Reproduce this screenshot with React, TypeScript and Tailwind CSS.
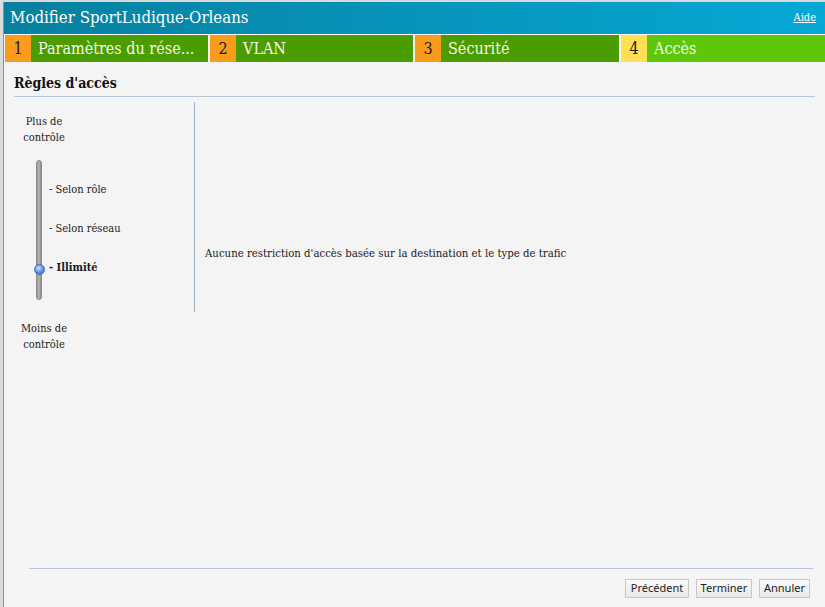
import React from "react";

const serif = { fontFamily: '"DejaVu Serif", "Liberation Serif", serif', fontStretch: "condensed" as const };

export default function App() {
  const steps = [
    { n: "1", label: "Paramètres du rése...", num: "bg-[#f99b1d]", body: "bg-[#4b9c00] w-[177px]" },
    { n: "2", label: "VLAN", num: "bg-[#f99b1d]", body: "bg-[#4b9c00] w-[177px]" },
    { n: "3", label: "Sécurité", num: "bg-[#f99b1d]", body: "bg-[#4b9c00] w-[178px]" },
    { n: "4", label: "Accès", num: "bg-[#ffdf55]", body: "bg-[#5ec70b] flex-1" },
  ];
  const buttons = [
    { label: "Précédent", w: "w-[64px]" },
    { label: "Terminer", w: "w-[56px]" },
    { label: "Annuler", w: "w-[51px]" },
  ];

  return (
    <div className="w-[825px] h-[607px] flex bg-[#d9d9d9] overflow-hidden" style={serif}>
      {/* window behind */}
      <div className="w-[3px] shrink-0 bg-[#dcdcdc]" />
      <div className="flex-1 flex flex-col border-l border-[#8e8e8e] bg-[#f4f4f4] mt-[2px]">
        {/* Header */}
        <div className="h-[33px] flex items-center justify-between px-[6px] bg-gradient-to-r from-[#07809f] to-[#06a8d6] border-b border-white">
          <span className="text-white text-[16.7px]">Modifier SportLudique-Orleans</span>
          <a className="text-white text-[11px] underline mr-[3px]">Aide</a>
        </div>

        {/* Steps */}
        <div className="h-[27px] flex pl-px">
          {steps.map((s, i) => (
            <div key={i} className={`flex ${i === 3 ? "flex-1" : ""} ${i > 0 ? "ml-[2px]" : ""}`}>
              <div className={`${s.num} w-[26px] flex items-center justify-center text-[16px] text-[#1a1a1a]`}>{s.n}</div>
              <div className={`${s.body} flex items-center pl-[7px] text-[16px] text-[#f4f8e6] whitespace-nowrap overflow-hidden`}>{s.label}</div>
            </div>
          ))}
        </div>

        {/* Section title */}
        <div className="mx-[10px] mt-[11px] pb-[2px] border-b border-[#b6c6d6] text-[14px] font-bold text-[#111]">Règles d'accès</div>

        {/* Content */}
        <div className="flex mt-[5px] ml-[10px] text-[11px] text-[#1a1a1a]">
          <div className="w-[180px] flex flex-col pt-[12px]">
            <div className="w-[60px] text-center leading-[16px]">Plus de<br />contrôle</div>
            <div className="flex mt-[14px] ml-[22px]">
              <div className="relative w-[6px] h-[140px] rounded-full bg-gradient-to-r from-[#9a9a9a] via-[#b5b5b5] to-[#8a8a8a] border border-[#8a8a8a]">
                <div className="absolute left-[-3px] top-[103px] w-[11px] h-[11px] rounded-full bg-[radial-gradient(circle_at_40%_35%,#cfe3ff,#5a8fe0_55%,#2f60b8)] border border-[#3e6cc0]" />
              </div>
              <div className="flex flex-col ml-[7px] pt-[22px] gap-[23px] leading-[16px]">
                <span>- Selon rôle</span>
                <span>- Selon réseau</span>
                <span className="font-bold">- Illimité</span>
              </div>
            </div>
            <div className="w-[60px] text-center leading-[16px] mt-[21px]">Moins de<br />contrôle</div>
          </div>
          <div className="w-px h-[210px] bg-[#9db1c7]" />
          <div className="pl-[10px] pt-[144px] text-[11.3px]">
            Aucune restriction d'accès basée sur la destination et le type de trafic
          </div>
        </div>

        <div className="flex-1" />
        {/* Footer */}
        <div className="mx-[25px] mr-[12px] border-t border-[#b6c6d6]" />
        <div className="flex justify-end gap-[7px] mr-[15px] mt-[10px] mb-[9px]" style={{ fontFamily: '"Noto Sans", sans-serif' }}>
          {buttons.map((b) => (
            <button key={b.label} className={`${b.w} h-[19px] text-[11px] text-[#222] bg-gradient-to-b from-[#fbfbfb] to-[#e8e8e8] border border-[#c8c8c8]`}>{b.label}</button>
          ))}
        </div>
      </div>
    </div>
  );
}
